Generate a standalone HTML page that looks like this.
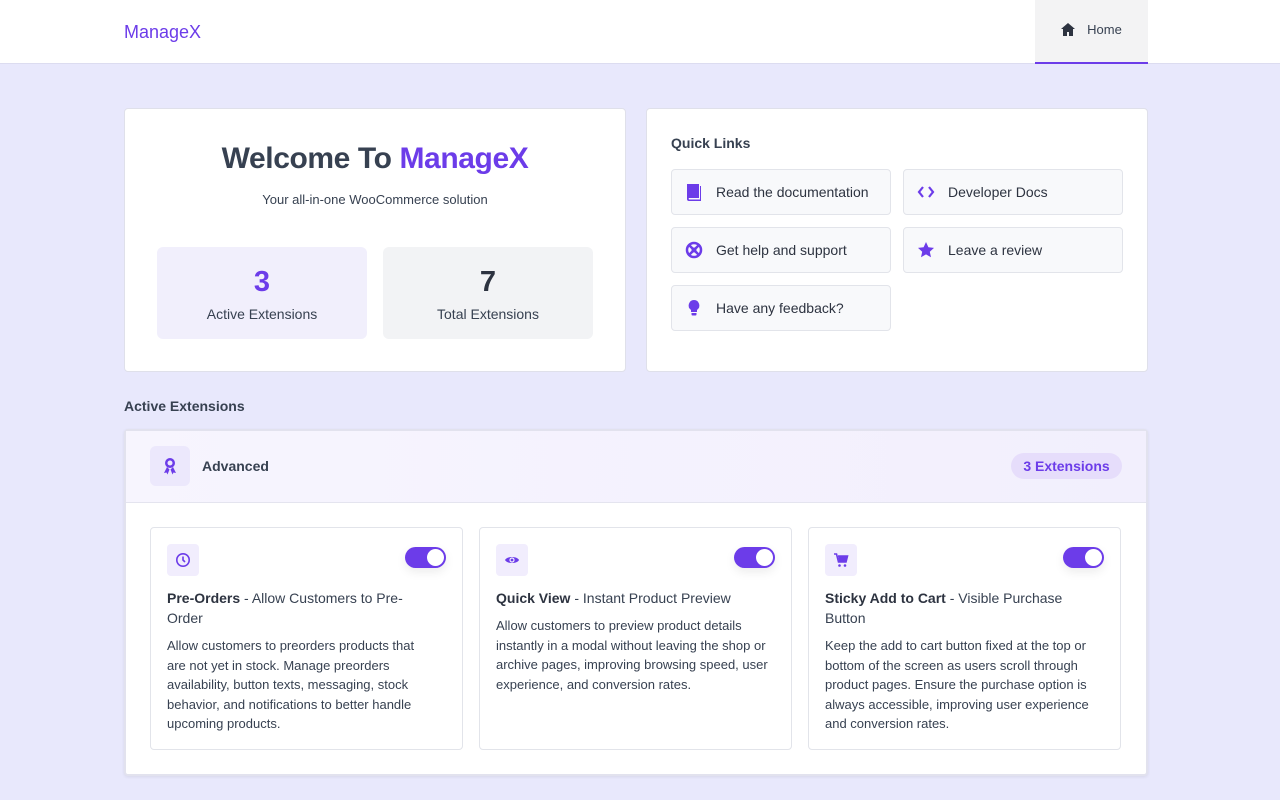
<!DOCTYPE html>
<html><head><meta charset="utf-8"><style>
*{box-sizing:border-box;margin:0;padding:0}
body{width:1280px;height:800px;background:#e8e8fc;font-family:"Liberation Sans",sans-serif;color:#374151;position:relative;overflow:hidden}
.abs{position:absolute}
.hdr{left:0;top:0;width:1280px;height:64px;background:#fff;border-bottom:1px solid #dcdcf0}
.logo{left:124px;top:22px;font-size:18px;color:#6c3ce9}
.home{left:1035px;top:0;width:113px;height:64px;background:#f3f3f4;border-bottom:2px solid #6c3ce9;font-size:13px;color:#374151;display:flex;align-items:center;justify-content:center;gap:12px;padding-bottom:4px}
.card{background:#fff;border:1px solid #dfe0ea;border-radius:4px}
.stat{border-radius:6px;text-align:center}
.stat b{display:block;font-size:29px;margin-top:19px}
.stat span{font-size:14px;display:block;margin-top:7px}
.ql{width:220px;height:46px;background:#f8f9fb;border:1px solid #e2e4ea;border-radius:4px;display:flex;align-items:center;font-size:14px;color:#2d3340}
.ql svg{margin-left:13px;margin-right:13px}
.ext{background:#fff;border:1px solid #e2e4ea;border-radius:4px;width:313px;height:223px;top:527px}
.ic{left:16px;top:16px;width:32px;height:32px;background:#f1edfd;border-radius:4px;display:flex;align-items:center;justify-content:center}
.tg{right:16px;top:19px;width:41px;height:21px;background:#6c3ce9;border-radius:11px;box-shadow:0 4px 10px rgba(0,0,0,.08)}
.tg:after{content:"";position:absolute;right:2px;top:2px;width:17px;height:17px;border-radius:50%;background:#fff}
.tt{left:16px;top:60px;width:270px;font-size:14px;line-height:20px;color:#374151}
.tt b{color:#2d3340}
.ds{left:16px;top:108px;width:272px;font-size:13px;line-height:19.6px;color:#374151}
</style></head><body>
<div class="abs hdr"></div>
<div class="abs logo">ManageX</div>
<div class="abs home"><svg width="14" height="13" viewBox="0 0 14 13"><path d="M7 0L0 6h2v7h4V9h2v4h4V6h2z" fill="#2d3340"/></svg>Home</div>

<div class="abs card" style="left:124px;top:108px;width:502px;height:264px"></div>
<div class="abs" style="left:124px;top:142px;width:502px;text-align:center;font-size:30px;font-weight:bold;color:#374151;letter-spacing:-0.4px">Welcome To <span style="color:#6c3ce9">ManageX</span></div>
<div class="abs" style="left:124px;top:192px;width:502px;text-align:center;font-size:13px;color:#374151">Your all-in-one WooCommerce solution</div>
<div class="abs stat" style="left:157px;top:247px;width:210px;height:92px;background:#f1effc"><b style="color:#6c3ce9">3</b><span>Active Extensions</span></div>
<div class="abs stat" style="left:383px;top:247px;width:210px;height:92px;background:#f2f3f5"><b style="color:#2d3340">7</b><span>Total Extensions</span></div>

<div class="abs card" style="left:646px;top:108px;width:502px;height:264px"></div>
<div class="abs" style="left:671px;top:135px;font-size:14px;font-weight:bold;color:#374151">Quick Links</div>
<div class="abs ql" style="left:671px;top:169px"><svg width="18" height="18" viewBox="0 0 18 18"><path d="M2 1h12v14H4a1 1 0 0 0 0 1.5h11V3h1v15H4a2 2 0 0 1-2-2z" fill="#6c3ce9"/></svg>Read the documentation</div>
<div class="abs ql" style="left:903px;top:169px"><svg width="18" height="18" viewBox="0 0 18 18"><path d="M6 4L2 9l4 5M12 4l4 5-4 5" stroke="#6c3ce9" stroke-width="2.2" fill="none"/></svg>Developer Docs</div>
<div class="abs ql" style="left:671px;top:227px"><svg width="18" height="18" viewBox="0 0 18 18"><circle cx="9" cy="9" r="7" stroke="#6c3ce9" stroke-width="2.5" fill="none"/><circle cx="9" cy="9" r="2.5" fill="#6c3ce9"/><path d="M4 4l10 10M14 4L4 14" stroke="#6c3ce9" stroke-width="2.5"/></svg>Get help and support</div>
<div class="abs ql" style="left:903px;top:227px"><svg width="18" height="18" viewBox="0 0 18 18"><path d="M9 1l2.4 5.3 5.6.6-4.2 3.8 1.2 5.6L9 13.4l-5 2.9 1.2-5.6L1 6.9l5.6-.6z" fill="#6c3ce9"/></svg>Leave a review</div>
<div class="abs ql" style="left:671px;top:285px"><svg width="18" height="18" viewBox="0 0 18 18"><path d="M9 1a5.5 5.5 0 0 0-3 10v2h6v-2A5.5 5.5 0 0 0 9 1zM6.5 14h5v1.5a1 1 0 0 1-1 1h-3a1 1 0 0 1-1-1z" fill="#6c3ce9"/></svg>Have any feedback?</div>

<div class="abs" style="left:124px;top:398px;font-size:14px;font-weight:bold;color:#374151">Active Extensions</div>
<div class="abs" style="left:124px;top:429px;width:1024px;height:347px;background:#fff;border:2px solid #e2e2ee;border-radius:4px;box-shadow:0 1px 3px rgba(0,0,0,.08)"></div>
<div class="abs" style="left:126px;top:431px;width:1020px;height:72px;background:linear-gradient(90deg,#f7f5fe,#f2effd);border-bottom:1px solid #e4e4ef"></div>
<div class="abs" style="left:150px;top:446px;width:40px;height:40px;background:#ece8fc;border-radius:6px;display:flex;align-items:center;justify-content:center"><svg width="16" height="18" viewBox="0 0 16 18"><circle cx="8" cy="6" r="5" fill="#6c3ce9"/><circle cx="8" cy="6" r="2.5" fill="#ece8fc"/><path d="M5 10l-3 6 2.5-.5 1 2 2-5zM11 10l3 6-2.5-.5-1 2-2-5z" fill="#6c3ce9"/></svg></div>
<div class="abs" style="left:202px;top:458px;font-size:14px;font-weight:bold;color:#374151">Advanced</div>
<div class="abs" style="left:1011px;top:453px;width:111px;height:26px;background:#e6ddfb;border-radius:13px;color:#6c3ce9;font-size:14px;font-weight:bold;text-align:center;line-height:26px">3 Extensions</div>

<div class="abs ext" style="left:150px"><div class="abs ic"><svg width="16" height="16" viewBox="0 0 16 16"><circle cx="8" cy="8" r="6.2" stroke="#6c3ce9" stroke-width="1.6" fill="none"/><path d="M8 4.5V8l2 2" stroke="#6c3ce9" stroke-width="1.6" fill="none"/></svg></div><div class="abs tg"></div>
<div class="abs tt"><b>Pre-Orders</b> - Allow Customers to Pre-Order</div>
<div class="abs ds" style="width:262px">Allow customers to preorders products that are not yet in stock. Manage preorders availability, button texts, messaging, stock behavior, and notifications to better handle upcoming products.</div></div>
<div class="abs ext" style="left:479px"><div class="abs ic"><svg width="16" height="16" viewBox="0 0 16 16"><path d="M1 8c2-4 12-4 14 0-2 4-12 4-14 0z" fill="#6c3ce9"/><circle cx="8" cy="8" r="2.6" fill="#f1edfd"/><circle cx="8" cy="8" r="1.4" fill="#6c3ce9"/></svg></div><div class="abs tg"></div>
<div class="abs tt"><b>Quick View</b> - Instant Product Preview</div>
<div class="abs ds" style="top:88px;width:276px">Allow customers to preview product details instantly in a modal without leaving the shop or archive pages, improving browsing speed, user experience, and conversion rates.</div></div>
<div class="abs ext" style="left:808px"><div class="abs ic"><svg width="16" height="16" viewBox="0 0 16 16"><path d="M1 2h2.5l2 8h7.5l1.5-6H5" stroke="#6c3ce9" stroke-width="1.6" fill="none"/><path d="M5 4h9.5l-1.5 6H6z" fill="#6c3ce9"/><circle cx="6.5" cy="13.5" r="1.3" fill="#6c3ce9"/><circle cx="12" cy="13.5" r="1.3" fill="#6c3ce9"/></svg></div><div class="abs tg"></div>
<div class="abs tt"><b>Sticky Add to Cart</b> - Visible Purchase Button</div>
<div class="abs ds" style="width:282px">Keep the add to cart button fixed at the top or bottom of the screen as users scroll through product pages. Ensure the purchase option is always accessible, improving user experience and conversion rates.</div></div>
</body></html>
